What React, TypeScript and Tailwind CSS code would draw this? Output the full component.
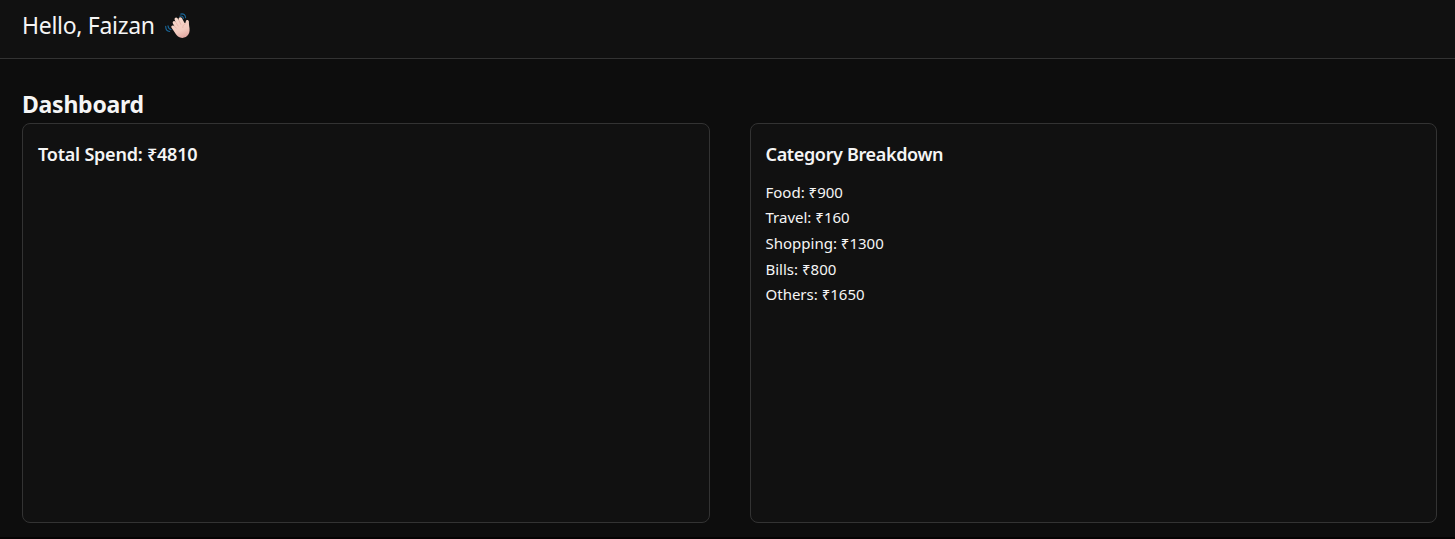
const categories = [
  { name: "Food", amount: 900 },
  { name: "Travel", amount: 160 },
  { name: "Shopping", amount: 1300 },
  { name: "Bills", amount: 800 },
  { name: "Others", amount: 1650 },
];

function WavingHand() {
  return (
    <svg width="26" height="26" viewBox="0 0 26 26" fill="none" aria-hidden="true">
      <defs>
        <linearGradient id="skin" x1="10" y1="4" x2="19" y2="25" gradientUnits="userSpaceOnUse">
          <stop stopColor="#f8dacd" />
          <stop offset="0.65" stopColor="#f3cbbf" />
          <stop offset="1" stopColor="#e0a59f" />
        </linearGradient>
      </defs>
      <g stroke="#1a6799" strokeWidth="1.1" strokeLinecap="round">
        <path d="M15.8 1.1c2.7-.8 4.6.8 4.8 3.6M14.8 3.2c2-.6 3.3.4 3.6 2.2" />
        <path d="M.7 13.4c0 2.9 1.5 4.7 4 5.1M3 12.8c.1 2 1.1 3.3 3 3.8" />
      </g>
      <path
        d="M6.6 14.8C5.6 13.3 7 11.8 8.5 12.6L9.6 13.4 7.9 10.4C7 8.6 9 7.1 10.3 8.6L11 9.5 9.7 6.9C8.9 4.9 11.3 3.6 12.5 5.3L13.9 7.3 13.6 6.1C13.3 4 16 3.4 17 5.2L19.4 9.8C19.8 10.5 20.4 10.4 20.5 9.6L20.9 8C21.3 6.3 23.8 6.6 23.9 8.5 24 10.2 23.9 11.8 24.2 13.3 24.8 16 24.9 19 23.5 21.3 21.8 24.2 18.4 25.6 15.2 24.6 11.7 23.6 9.8 19.2 6.6 14.8Z"
        fill="url(#skin)"
      />
      <path
        d="m9.7 13.5 1.7 1.7m-.4-5.6 2.1 3.4m.8-5.6 2 4m4.4-.6c-1.7.5-2.6 1.9-2.5 3.7"
        stroke="#dfa69d"
        strokeWidth="0.6"
        strokeLinecap="round"
      />
    </svg>
  );
}

export default function App() {
  return (
    <div className="flex h-[539px] flex-col overflow-hidden border-b-2 border-[#050303] bg-[#0d0d0d] font-['Noto_Sans','Open_Sans',sans-serif] text-[#f5f5f5]">
      <header className="flex h-[59px] shrink-0 items-start border-b border-[#333333] bg-[#111111] pt-[9px] pl-[22px]">
        <span className="w-[143px] text-[23px] leading-[33px] tracking-[-0.3px] whitespace-nowrap">
          Hello, Faizan
        </span>
        <span className="mt-[4px]">
          <WavingHand />
        </span>
      </header>
      <main className="pt-[29px] pr-[18px] pl-[22px]">
        <h1 className="h-[35px] text-[23px] leading-[33px] font-bold tracking-[-0.25px]">Dashboard</h1>
        <div className="grid grid-cols-2 gap-10">
          <section className="h-[400px] rounded-lg border border-[#333333] bg-[#111111] px-[15px] pt-[16px]">
            <h2 className="text-[18px] leading-[29px] font-semibold tracking-[-0.22px]">Total Spend: ₹4810</h2>
          </section>
          <section className="h-[400px] rounded-lg border border-[#333333] bg-[#111111] px-[15px] pt-[16px]">
            <h2 className="mb-[10.8px] text-[18px] leading-[29px] font-semibold tracking-[-0.35px]">
              Category Breakdown
            </h2>
            <ul className="text-[15px] leading-[25.6px]">
              {categories.map((c) => (
                <li key={c.name}>
                  {c.name}: ₹{c.amount}
                </li>
              ))}
            </ul>
          </section>
        </div>
      </main>
    </div>
  );
}
